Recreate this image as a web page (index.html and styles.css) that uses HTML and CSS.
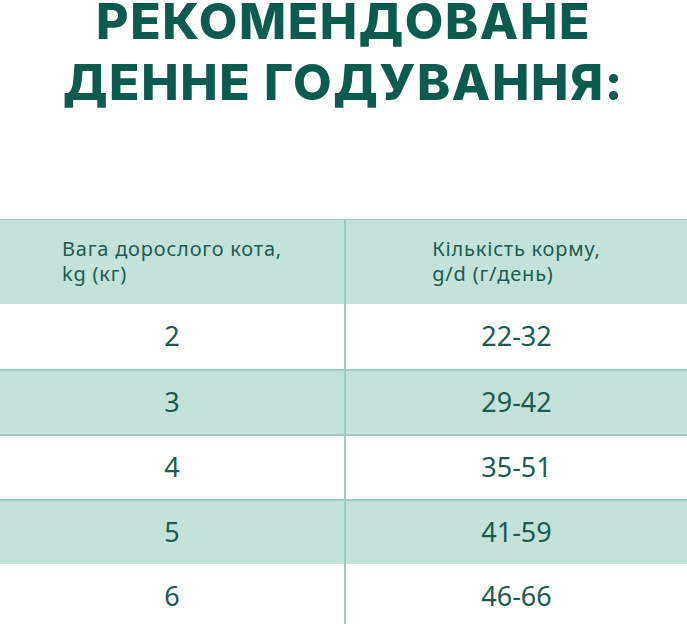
FILE: index.html
```html
<!DOCTYPE html>
<html lang="uk">
<head>
<meta charset="utf-8">
<title>Рекомендоване денне годування</title>
<link rel="stylesheet" href="styles.css">
</head>
<body>
<h1 class="title">РЕКОМЕНДОВАНЕ<br>ДЕННЕ ГОДУВАННЯ:</h1>
<div class="table">
  <div class="row head">
    <div class="cell left"><div class="htext">Вага дорослого кота,<br>kg (кг)</div></div>
    <div class="cell right"><div class="htext">Кількість корму,<br>g/d (г/день)</div></div>
  </div>
  <div class="row">
    <div class="cell left">2</div>
    <div class="cell right">22-32</div>
  </div>
  <div class="row green lined">
    <div class="cell left">3</div>
    <div class="cell right">29-42</div>
  </div>
  <div class="row lined">
    <div class="cell left">4</div>
    <div class="cell right">35-51</div>
  </div>
  <div class="row green lined">
    <div class="cell left">5</div>
    <div class="cell right">41-59</div>
  </div>
  <div class="row">
    <div class="cell left">6</div>
    <div class="cell right">46-66</div>
  </div>
</div>
</body>
</html>
```
FILE: styles.css
```css
html, body {
  margin: 0;
  padding: 0;
  background: #ffffff;
}
body {
  width: 687px;
  overflow: hidden;
}
.title {
  margin: -9px 0 0 0;
  font-family: Inter, "DejaVu Sans", sans-serif;
  font-weight: 800;
  font-size: 50px;
  line-height: 61px;
  letter-spacing: 1.6px;
  text-align: center;
  color: #0b5c4e;
  height: 228px;
}
.table {
  border-top: 1.5px solid #98cdbf;
  font-family: "Noto Sans", "Open Sans", sans-serif;
  color: #1d5b50;
}
.row {
  display: grid;
  grid-template-columns: 346px 341px;
  height: 65px;
  box-sizing: border-box;
}
.row.head {
  height: 84px;
  background: #c3e3da;
}
.row.green {
  background: #c3e3da;
}
.row.lined {
  border-top: 2px solid #98cdbf;
  height: 65px;
}
.cell {
  display: flex;
  align-items: center;
  justify-content: center;
  font-size: 27px;
  padding-bottom: 3px;
}
.cell.left {
  border-right: 2px solid #98cdbf;
}
.htext {
  font-size: 20px;
  line-height: 25px;
  text-align: left;
  letter-spacing: 0.8px;
}
```
